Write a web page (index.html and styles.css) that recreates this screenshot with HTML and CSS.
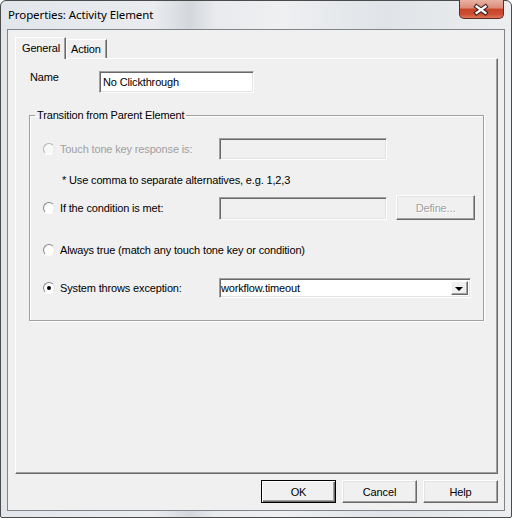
FILE: index.html
```html
<!DOCTYPE html>
<html lang="en">
<head>
    <meta charset="UTF-8">
    <meta name="viewport" content="width=device-width, initial-scale=1.0">
    <title>Properties: Activity Element</title>
    <link rel="stylesheet" href="styles.css">
</head>
<body>
    <div class="window">
        <div class="titlebar">
            <span class="title">Properties: Activity Element</span>
            <button class="close-btn" aria-label="Close">
                <svg width="45" height="19" viewBox="0 0 45 19">
                    <path d="M18 7.5 L27 14 M27 7.5 L18 14" stroke="#3b2420" stroke-width="4.6" stroke-linecap="square" fill="none"/>
                    <path d="M18 7.5 L27 14 M27 7.5 L18 14" stroke="#fff" stroke-width="2.4" stroke-linecap="square" fill="none"/>
                </svg>
            </button>
        </div>

        <div class="client">
            <div class="tabs">
                <div class="tab active">General</div>
                <div class="tab">Action</div>
            </div>

            <div class="panel">
                <div class="name-row">
                    <label class="name-label">Name</label>
                    <div class="field name-field">No Clickthrough</div>
                </div>

                <fieldset class="group">
                    <legend>Transition from Parent Element</legend>

                    <!-- touch tone (disabled) -->
                    <div class="opt-row row-touch">
                        <div class="opt disabled">
                            <span class="radio"></span>
                            <span>Touch tone key response is:</span>
                        </div>
                        <div class="field input disabled"></div>
                    </div>
                    <div class="hint">* Use comma to separate alternatives, e.g. 1,2,3</div>

                    <!-- condition -->
                    <div class="opt-row row-cond">
                        <div class="opt">
                            <span class="radio"></span>
                            <span>If the condition is met:</span>
                        </div>
                        <div class="field input disabled"></div>
                        <button class="btn define" disabled>Define...</button>
                    </div>

                    <div class="opt-row row-always">
                        <div class="opt wide">
                            <span class="radio"></span>
                            <span>Always true (match any touch tone key or condition)</span>
                        </div>
                    </div>

                    <!-- exception -->
                    <div class="opt-row row-exc">
                        <div class="opt">
                            <span class="radio checked"></span>
                            <span>System throws exception:</span>
                        </div>
                        <div class="field combo">
                            <span class="combo-text">workflow.timeout</span>
                            <span class="combo-arrow"></span>
                        </div>
                    </div>
                </fieldset>
            </div>

            <div class="buttons">
                <button class="btn default">OK</button>
                <button class="btn">Cancel</button>
                <button class="btn">Help</button>
            </div>
        </div>
    </div>
</body>
</html>
```

FILE: styles.css
```css
* {
    box-sizing: border-box;
}
body {
    margin: 0;
    width: 512px;
    height: 518px;
    font-family: "Liberation Sans", Arial, sans-serif;
    font-size: 11px;
    letter-spacing: -0.15px;
    color: #000;
    background: #fff;
}
.window {
    width: 512px;
    height: 518px;
    display: flex;
    flex-direction: column;
    border: 1px solid #4b4b4b;
    border-radius: 6px 6px 2px 2px;
    padding: 0 6px 6px 6px;
    background: linear-gradient(90deg, #e2e6eb 0%, #eaecef 30%, #d3d7dc 37%, #e8eaed 42%, #eef0f2 55%, #e0e3e7 75%, #eceef0 100%);
}
.titlebar {
    height: 28px;
    display: flex;
    justify-content: space-between;
    align-items: flex-start;
    flex-shrink: 0;
}
.title {
    font-family: "Noto Sans", sans-serif;
    font-size: 11.5px;
    letter-spacing: -0.1px;
    margin: 6px 0 0 1px;
    color: #000;
}
.close-btn {
    width: 45px;
    height: 19px;
    margin: -1px 1px 0 0;
    padding: 0;
    border: 1px solid #5c2d22;
    border-top: none;
    border-radius: 0 0 5px 5px;
    background: linear-gradient(#e9b2a4 0%, #dc8a76 45%, #c7442b 50%, #cf4f33 80%, #e0765a 100%);
    display: flex;
}
.close-btn svg {
    margin: -1px 0 0 -1px;
}
.client {
    flex: 1;
    display: flex;
    flex-direction: column;
    border: 1px solid #7f8489;
    background: #f0f0f0;
    padding: 7px 6px 7px 7px;
}

/* tabs */
.tabs {
    display: flex;
    height: 21px;
    flex-shrink: 0;
}
.tab {
    height: 19px;
    margin-top: 2px;
    padding: 3px 5px 0 4px;
    border: 1px solid #fff;
    border-right-color: #696969;
    border-bottom: none;
    box-shadow: inset -1px 0 0 #a0a0a0;
    background: #f0f0f0;
}
.tab.active {
    position: relative;
    z-index: 1;
    width: 51px;
    height: 22px;
    margin-top: 0;
    padding: 4px 0 0 6px;
}
.panel {
    flex: 1;
    border: 1px solid #fff;
    border-right-color: #696969;
    border-bottom-color: #696969;
    box-shadow: inset -1px -1px 0 #a0a0a0;
    padding: 12px 0 0 13px;
}

/* name */
.name-row {
    display: flex;
    padding-left: 1px;
}
.name-label {
    width: 69px;
    padding-top: 0;
}
.field {
    border: 1px solid;
    border-color: #a0a0a0 #fff #fff #a0a0a0;
    box-shadow: inset 1px 1px 0 #696969, inset -1px -1px 0 #e3e3e3;
    background: #fff;
}
.name-field {
    width: 155px;
    height: 22px;
    padding: 4px 0 0 3px;
}

/* group */
.group {
    width: 455px;
    margin: 16px 0 0 0;
    padding: 0 0 22px 13px;
    border: 1px solid #a0a0a0;
    box-shadow: inset 1px 1px 0 #fff, 1px 1px 0 #fff;
}
.group legend {
    margin-left: -8px;
    padding: 0 2px;
}
.opt-row {
    display: flex;
    align-items: center;
}
.opt {
    width: 176px;
    display: flex;
    align-items: center;
    gap: 5px;
}
.opt.wide {
    width: auto;
}
.opt.disabled {
    color: #a0a0a0;
}
.radio {
    width: 12px;
    height: 12px;
    border-radius: 50%;
    border: 1px solid;
    border-color: #8a8a8a #e6e6e6 #fff #8a8a8a;
    background: radial-gradient(circle at 60% 60%, #fff 55%, #e8e8e8 100%);
    display: flex;
    align-items: center;
    justify-content: center;
    flex-shrink: 0;
}
.disabled .radio {
    border-color: #b4b4b4 #e6e6e6 #fff #b4b4b4;
    background: #f8f8f8;
}
.radio.checked::after {
    content: "";
    width: 4px;
    height: 4px;
    border-radius: 50%;
    background: #000;
}
.input {
    width: 168px;
}
.input.disabled {
    background: #f0f0f0;
}
.row-touch {
    margin-top: 17px;
    height: 22px;
}
.row-touch .input {
    height: 22px;
}
.hint {
    margin: 14px 0 0 19px;
    line-height: 13px;
}
.row-cond {
    margin-top: 8px;
    height: 25px;
}
.row-cond .input {
    height: 23px;
    margin-top: 2px;
}
.row-always {
    margin-top: 20px;
    height: 20px;
}
.row-exc {
    margin-top: 18px;
    height: 20px;
}

/* buttons */
.btn {
    font-family: "Liberation Sans", Arial, sans-serif;
    font-size: 11px;
    letter-spacing: -0.15px;
    color: #000;
    width: 75px;
    height: 23px;
    padding: 0;
    border: 1px solid;
    border-color: #fff #696969 #696969 #fff;
    box-shadow: inset -1px -1px 0 #a0a0a0, inset 1px 1px 0 #e3e3e3;
    background: #f0f0f0;
}
.btn.default {
    border-color: #000;
    box-shadow: inset 1px 1px 0 #fff, inset -1px -1px 0 #696969, inset -2px -2px 0 #a0a0a0;
}
.define {
    width: 79px;
    height: 25px;
    margin-left: 9px;
    color: #a0a0a0;
    text-shadow: 1px 1px 0 #fff;
}
.combo {
    width: 252px;
    height: 20px;
    display: flex;
    align-items: center;
    justify-content: space-between;
    padding: 0 2px 0 1px;
}
.combo-arrow {
    width: 17px;
    height: 14px;
    border: 1px solid;
    border-color: #fff #696969 #696969 #fff;
    box-shadow: inset -1px -1px 0 #a0a0a0;
    background: #f0f0f0;
    display: flex;
    align-items: center;
    justify-content: center;
}
.combo-arrow::after {
    content: "";
    border-left: 4px solid transparent;
    border-right: 4px solid transparent;
    border-top: 4px solid #000;
    margin: 1px 1px 0 0;
}
.buttons {
    display: flex;
    justify-content: flex-end;
    gap: 6px;
    margin-top: 6px;
    flex-shrink: 0;
}
```
